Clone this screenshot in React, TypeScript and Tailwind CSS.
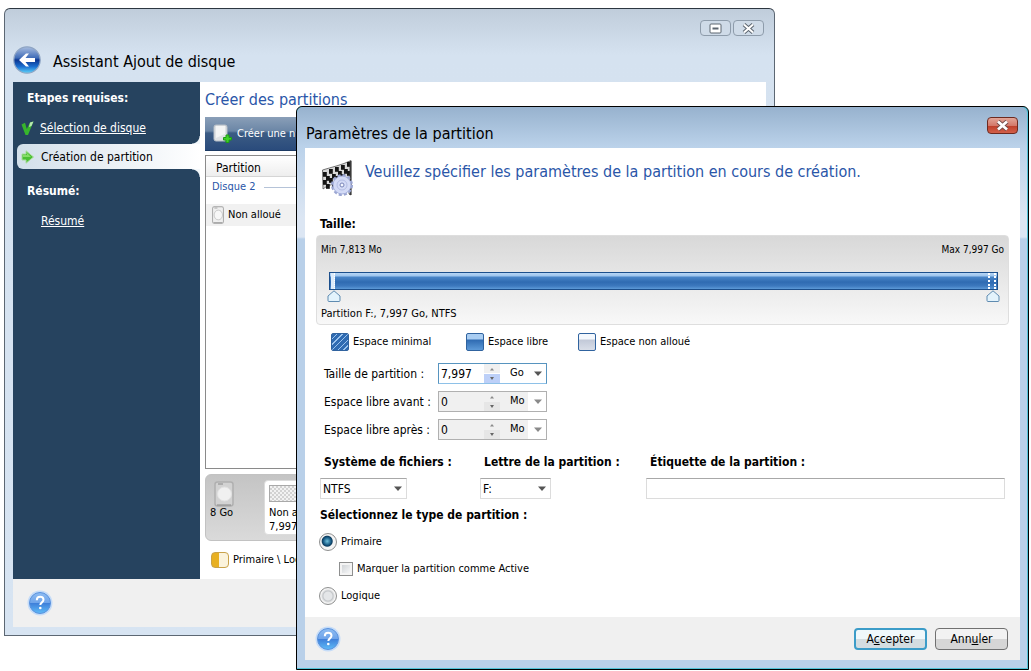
import { useState, type ReactNode } from 'react';

function HelpIcon() {
  return (
    <svg width="26" height="26" viewBox="0 0 26 26" aria-hidden="true">
      <defs>
        <linearGradient id="helpBall" x1="0" y1="0" x2="0" y2="1">
          <stop offset="0" stopColor="#8fbdf2" />
          <stop offset="0.48" stopColor="#6fa4ea" />
          <stop offset="0.52" stopColor="#3f80da" />
          <stop offset="1" stopColor="#5fbcf8" />
        </linearGradient>
      </defs>
      <circle cx="13" cy="13" r="12.5" fill="#c5dcf8" />
      <circle cx="13" cy="13" r="10.5" fill="url(#helpBall)" stroke="#5a92de" />
      <path
        d="M9.8 10.2c0-2.2 1.4-3.4 3.4-3.4s3.3 1.2 3.3 3c0 2.6-3.2 2.6-3.2 5.2"
        fill="none"
        stroke="#fff"
        strokeWidth="2"
      />
      <circle cx="13.3" cy="18" r="1.3" fill="#fff" />
    </svg>
  );
}

function BackIcon() {
  return (
    <svg width="28" height="28" viewBox="0 0 28 28" aria-hidden="true">
      <defs>
        <linearGradient id="backBall" x1="0" y1="0" x2="0" y2="1">
          <stop offset="0" stopColor="#a9bddf" />
          <stop offset="0.42" stopColor="#3f6cb8" />
          <stop offset="0.5" stopColor="#0b3590" />
          <stop offset="0.75" stopColor="#1b6fd0" />
          <stop offset="1" stopColor="#5fd4fa" />
        </linearGradient>
      </defs>
      <circle cx="14" cy="14" r="13.2" fill="url(#backBall)" stroke="#8fa5c4" strokeWidth="1.2" />
      <path d="M6 14l7-6.500h3L12.500 12H22v4h-9.500l3.500 4.500h-3z" fill="#fff" />
    </svg>
  );
}

function CheckIcon() {
  return (
    <svg width="13" height="15" viewBox="0 0 13 15" aria-hidden="true">
      <path d="M0.500 3.500L4 1.800 5.800 8 9 1.500 12.500 0.500 7 14H4.500z" fill="#37b52c" />
      <path d="M9 1.500L12.500 0.500 10.500 5 8 6z" fill="#b8e8b0" />
    </svg>
  );
}

function StepArrowIcon() {
  return (
    <svg width="14" height="14" viewBox="0 0 14 14" aria-hidden="true">
      <path d="M1 4h4V0.800L12.500 7 5 13.200V10H1z" fill="#4cc034" stroke="#a9dc9c" />
      <path d="M2 5h4V3l4 4H2z" fill="#86dd68" />
    </svg>
  );
}

function DiskIcon({ size = 'small' }: { size?: 'small' | 'large' }) {
  const large = size === 'large';
  return (
    <svg width={large ? 20 : 12} height={large ? 26 : 18} viewBox="0 0 20 26" preserveAspectRatio="none" aria-hidden="true">
      <rect x="1" y="1" width="18" height="24" rx="2.500" fill={large ? '#d2d2d2' : '#efefef'} stroke={large ? '#b0b0b0' : '#a3a3a3'} strokeWidth="1.500" />
      <circle cx="10.500" cy="13" r="7" fill={large ? '#f0f0f0' : '#f7f7f7'} stroke={large ? '#e2e2e2' : '#b5b5b5'} />
      <path d="M4 3h5M3 24h14" stroke="#888" />
    </svg>
  );
}

function NewPartitionIcon() {
  return (
    <svg width="20" height="20" viewBox="0 0 20 20" aria-hidden="true">
      <rect x="1" y="1" width="13" height="16" rx="2" fill="#dfe2e4" stroke="#b7bec6" />
      <path d="M3 2h9v8L3 14z" fill="#f3f4f4" />
      <path d="M13 11h3v2.500h2.500V16H16v2.500h-3V16h-2.500v-2.500H13z" fill="#3ed128" stroke="#1f9c14" />
    </svg>
  );
}

function FlagIcon() {
  const squares = [
    [1, 12], [7, 9], [13, 7], [19, 5], [25, 2],
    [4, 16], [10, 14], [16, 11], [22, 9],
    [1, 20], [7, 18], [13, 16], [19, 14], [25, 11],
    [4, 24], [10, 22],
  ];
  return (
    <svg width="31" height="37" viewBox="0 0 31 37" aria-hidden="true">
      <path d="M0.500 10C10 7 20 5 29 0.500V35l-2-1V20C18 24 8 23 1 29z" fill="#d8d8d8" stroke="#555" strokeWidth="0.800" />
      {squares.map(([x, y]) => (
        <rect key={`${x}-${y}`} x={x} y={y} width="3.800" height="4.800" fill="#141414" />
      ))}
      <path d="M28.500 1v34" stroke="#3a3a3a" strokeWidth="1.800" />
      <circle cx="20" cy="25" r="9.500" fill="none" stroke="#9aa5d2" strokeWidth="3" strokeDasharray="3 2" />
      <circle cx="20" cy="25" r="9" fill="#d3daf6" stroke="#a5b0dc" />
      <circle cx="20" cy="25" r="5" fill="none" stroke="#b3bde4" />
      <circle cx="20" cy="25" r="2" fill="#f4f6ff" stroke="#7884b8" />
    </svg>
  );
}

function Triangle({ up = false, muted = false }: { up?: boolean; muted?: boolean }) {
  return (
    <svg width="8" height="5" viewBox="0 0 8 5" className="pointer-events-none shrink-0" aria-hidden="true">
      <path d={up ? 'M2 4.500h4L4 2z' : 'M0 0.500h8L4 5z'} fill={muted ? '#8a8a8a' : '#555'} />
    </svg>
  );
}

function SizeField({ id, label, value, unit, disabled = false }: {
  id: string; label: string; value: string; unit: string; disabled?: boolean;
}) {
  return (
    <div className="flex items-center">
      <label htmlFor={id} className="w-[114px] whitespace-nowrap">{label}</label>
      <div className={`flex h-[21px] w-[109px] items-stretch border ${disabled ? 'border-[#b0b0b0] bg-[#f0f0f0]' : 'border-[#5794bf] border-b-[#8ec1e8] bg-white'}`}>
        <input id={id} defaultValue={value} disabled={disabled} className="w-[45px] min-w-0 px-0.5 outline-none" />
        <div className="flex w-4 flex-col gap-px">
          <button type="button" aria-label={`Augmenter ${label}`} disabled={disabled} className="flex flex-1 items-center justify-center bg-[#f0f0f0]">
            <Triangle up muted />
          </button>
          <button type="button" aria-label={`Diminuer ${label}`} disabled={disabled} className={`flex flex-1 items-center justify-center ${disabled ? 'bg-[#e6e6e6]' : 'bg-[#bdd0f8]'}`}>
            <svg width="6" height="4" viewBox="0 0 6 4" aria-hidden="true"><path d="M1 0h4L3 3z" fill="#666" /></svg>
          </button>
        </div>
        <div className={`relative flex flex-1 ${disabled ? 'bg-gradient-to-r from-[#f0f0f0] from-60% to-white to-60%' : ''}`}>
          <select aria-label={`Unité, ${label}`} defaultValue={unit} disabled={disabled} className="w-full appearance-none pl-2.5 text-[11px] opacity-100 outline-none">
            <option>Mo</option>
            <option>Go</option>
          </select>
          <span className="pointer-events-none absolute inset-y-0 right-1 flex items-center"><Triangle muted={disabled} /></span>
        </div>
      </div>
    </div>
  );
}

function SelectBox({ id, options, className }: { id: string; options: string[]; className: string }) {
  return (
    <div className={`relative flex h-[21px] border border-[#dcdcdc] border-t-[#a8a8a8] bg-white ${className}`}>
      <select id={id} className="w-full appearance-none pl-0.5 outline-none">
        {options.map((o) => <option key={o}>{o}</option>)}
      </select>
      <span className="pointer-events-none absolute inset-y-0 right-1 flex items-center"><Triangle /></span>
    </div>
  );
}

function Legend({ swatch, children }: { swatch: string; children: ReactNode }) {
  return (
    <div className="flex items-center gap-1">
      <span className={`h-[18px] w-[18px] rounded-xs border border-[#30639f] ${swatch}`} />
      {children}
    </div>
  );
}

function SizeSlider() {
  const [range, setRange] = useState([0, 100]);
  const names = ['Début de la partition', 'Fin de la partition'];

  return (
    <div className="relative mr-2.5 ml-3 h-[30px]">
      <div className="flex h-[18px] items-stretch justify-between border border-[#1c4f8c] bg-[linear-gradient(to_bottom,#b7d6f5_0px,#9cc4ee_3px,#4a86c8_4px,#2f6bb2_9px,#3d79be_13px,#5d9ad8_16px)] px-px">
        <span className="w-1 border-r border-dotted border-white bg-[#dcebfa]" />
        <span className="w-2 border-x-2 border-dotted border-white" />
      </div>
      {range.map((value, i) => (
        <div key={names[i]}>
          <input
            type="range"
            aria-label={names[i]}
            value={value}
            onChange={(e) => setRange(range.map((v, j) => (j === i ? Number(e.target.value) : v)))}
            className="absolute bottom-0 left-0 h-3 w-full opacity-0"
          />
          <svg
            width="14"
            height="12"
            viewBox="0 0 14 12"
            className="pointer-events-none absolute bottom-0 -translate-x-1/2"
            style={{ left: `calc(${value}% + ${5 - value / 10}px)` }}
            aria-hidden="true"
          >
            <path d="M7 0.800L13 6v4.500q0 1-1 1H2q-1 0-1-1V6z" fill="#e3f3fc" stroke="#5f8bb0" />
          </svg>
        </div>
      ))}
    </div>
  );
}

function WizardWindow() {
  return (
    <section className="col-start-1 row-start-1 mt-2 mr-[256px] ml-1 flex flex-col rounded-t-md border border-[#5c6773] border-t-[#2c3640] bg-[linear-gradient(to_bottom,#c0cddb_0px,#d5e2f0_46px,#d7e4f2_100%)] px-2 pb-2">
      <header className="flex h-[73px] justify-between">
        <div className="flex items-end gap-3 pb-2">
          <button type="button" aria-label="Retour"><BackIcon /></button>
          <h1 className="text-base">Assistant Ajout de disque</h1>
        </div>
        <div className="mt-[11px] mr-[2px] flex h-4 gap-0.5">
          <button type="button" aria-label="Réduire" className="flex w-[31px] items-center justify-center rounded-sm border border-[#8e9cab] bg-[#cfdbe8]">
            <svg width="13" height="11" viewBox="0 0 13 11" aria-hidden="true">
              <rect x="1" y="1" width="11" height="9" rx="1" fill="#fff" stroke="#5d6670" />
              <path d="M3.500 5.500h6" stroke="#5d6670" strokeWidth="2" />
            </svg>
          </button>
          <button type="button" aria-label="Fermer l’assistant" className="flex w-[31px] items-center justify-center rounded-sm border border-[#8e9cab] bg-[#cfdbe8]">
            <svg width="13" height="11" viewBox="0 0 13 11" aria-hidden="true">
              <path d="M2 1.500l9 8M11 1.500l-9 8" stroke="#5d6670" strokeWidth="4" />
              <path d="M2 1.500l9 8M11 1.500l-9 8" stroke="#fff" strokeWidth="2" />
            </svg>
          </button>
        </div>
      </header>

      <div className="flex bg-white">
        <nav className="w-[187px] shrink-0 bg-[#26435f] pt-2 text-xs leading-4 text-white">
          <h2 className="pl-3.5 font-bold">Etapes requises:</h2>
          <div className="mt-3.5 flex h-4 items-center gap-1.5 pl-2">
            <CheckIcon />
            <a href="#selection" className="underline">Sélection de disque</a>
          </div>
          <div className="flex flex-col">
            <span className="h-2 w-2 self-end bg-[radial-gradient(circle_at_0_0,#26435f_7px,#f3f8fb_8px)]" />
            <div className="ml-1 flex h-[25px] items-center gap-1.5 rounded-l-md bg-gradient-to-r from-[#d3e0ea] to-white pl-1 text-black">
              <StepArrowIcon />
              <span>Création de partition</span>
            </div>
            <span className="h-2 w-2 self-end bg-[radial-gradient(circle_at_0_100%,#26435f_7px,#f3f8fb_8px)]" />
          </div>
          <h2 className="mt-1.5 pl-3.5 font-bold">Résumé:</h2>
          <a href="#resume" className="mt-3.5 ml-7 inline-block underline">Résumé</a>
        </nav>

        <div className="min-w-0 flex-1 overflow-hidden whitespace-nowrap pl-[5px]">
          <h2 className="pt-1.5 text-base text-[#2a56a8]">Créer des partitions</h2>
          <div className="mt-[5px] flex h-[34px] items-center border-b border-[#1c3a63] bg-[linear-gradient(to_bottom,#8a9fb8_0px,#6b86a6_14px,#3c5c84_16px,#2a4b7c_100%)] pl-2 text-white">
            <button type="button" className="flex items-center gap-1">
              <NewPartitionIcon />
              Créer une n
            </button>
          </div>
          <div className="mt-[4px] h-[314px] border border-[#8a8a8a]">
            <table className="w-full border-collapse text-left">
              <thead>
                <tr className="h-5 bg-gradient-to-b from-white to-[#ededed]">
                  <th className="border-b border-[#d5d5d5] pt-1 pl-2.5 text-xs font-normal leading-4">Partition</th>
                </tr>
              </thead>
              <tbody>
                <tr className="h-[27px]">
                  <td className="pb-1.5 pl-1.5 text-[#2a56a8]">
                    <div className="flex items-center gap-2">
                      Disque 2
                      <span className="h-px flex-1 bg-[#b5c3d8]" />
                    </div>
                  </td>
                </tr>
                <tr className="h-[22px] bg-[#f1f1f1]">
                  <td className="pl-1.5">
                    <div className="flex items-center gap-1"><DiskIcon />Non alloué</div>
                  </td>
                </tr>
              </tbody>
            </table>
          </div>
          <div className="mt-[5px] flex h-[67px] rounded-l-md border border-[#c2c2c2] bg-gradient-to-b from-[#c4c4c4] to-[#dadada]">
            <div className="w-[58px] pt-1.5 pl-1">
              <span className="block pl-1"><DiskIcon size="large" /></span>
              <span className="block leading-3">8 Go</span>
            </div>
            <div className="my-[5px] w-[400px] rounded-sm border border-[#dcdcdc] bg-white p-1 leading-3.5">
              <div className="mb-1 h-[17px] border border-[#a9a9a9] bg-[#e8e8e8] bg-[repeating-conic-gradient(#d2d2d2_0_25%,#f2f2f2_0_50%)] bg-size-[4px_4px]" />
              Non alloué
              <br />
              7,997 Go
            </div>
          </div>
          <div className="flex h-[38px] items-center gap-1 pl-1.5">
            <span className="h-4 w-[18px] rounded-sm border border-[#c9a24a] bg-gradient-to-r from-[#e8b022] from-45% to-[#fbf3dc] to-45%" />
            Primaire \ Logique
          </div>
        </div>
      </div>

      <footer className="flex h-12 items-center bg-[#f0f0f0] pl-3.5">
        <button type="button" aria-label="Aide de l’assistant"><HelpIcon /></button>
      </footer>
    </section>
  );
}

function PartitionDialog() {
  const [kind, setKind] = useState('primaire');
  const radio =
    'h-[18px] w-[18px] appearance-none rounded-full border border-[#8e8f8f] bg-[radial-gradient(circle,#e4e6e8_0_4px,#c3c6c9_5px,#f4f4f4_7px)] checked:bg-[radial-gradient(circle_at_45%_45%,#6fc0dc_0,#14557f_4px,#0f3d5e_5px,#f4f4f4_6px)]';

  return (
    <section role="dialog" aria-labelledby="dialog-title" className="z-10 col-start-1 row-start-1 mt-[106px] mr-[2px] ml-[296px] rounded-t-md border border-black bg-[#52c3d8] pr-px pb-px">
      <div className="rounded-t-md bg-[linear-gradient(to_bottom,#97b2ce_0px,#bbd2ea_40px,#dce6f3_110px,#dce6f3_130px,#b9d0e9_132px)] pt-px pr-[7px] pb-2 pl-2">
        <header className="flex h-10 items-center justify-between">
          <h1 id="dialog-title" className="pt-3 pl-px text-base">Paramètres de la partition</h1>
          <button type="button" aria-label="Fermer" className="mr-0.5 mb-1.5 flex h-[17px] w-[31px] items-center justify-center rounded-sm border border-[#6d2a20] bg-[linear-gradient(to_bottom,#e2a598_0,#d4796a_50%,#bd3c28_50%,#d2604a_100%)]">
            <svg width="13" height="11" viewBox="0 0 13 11" aria-hidden="true">
              <path d="M2 1.500l9 8M11 1.500l-9 8" stroke="#6f4a48" strokeWidth="4.500" />
              <path d="M2 1.500l9 8M11 1.500l-9 8" stroke="#fff" strokeWidth="2.800" />
            </svg>
          </button>
        </header>

        <div className="bg-white px-[11px] py-3">
          <div className="flex h-[38px] gap-3 pl-1.5">
            <FlagIcon />
            <p className="text-base text-[#2a56a8]">
              Veuillez spécifier les paramètres de la partition en cours de création.
            </p>
          </div>
          <h2 className="mt-[18px] pl-1 text-xs font-bold leading-4">Taille:</h2>

          <div className="mt-[3px] h-[90px] rounded-sm border border-[#dedede] bg-gradient-to-b from-[#d8d8d8] to-[#f8f8f8]">
            <div className="flex h-9 justify-between px-1 pt-1.5 text-[10px] leading-4">
              <span>Min 7,813 Mo</span>
              <span>Max 7,997 Go</span>
            </div>
            <SizeSlider />
            <p className="pt-1 pl-1 leading-4">Partition F:, 7,997 Go, NTFS</p>
          </div>

          <div className="mt-2 ml-[15px] flex h-[18px]">
            <div className="w-[135px]">
              <Legend swatch="bg-[repeating-linear-gradient(135deg,#2f6bb2_0_3px,#9cc4ee_3px_4px)]">Espace minimal</Legend>
            </div>
            <div className="w-[112px]">
              <Legend swatch="bg-[linear-gradient(to_bottom,#a9cdf2_0_5px,#2f6bb2_6px,#5d9ad8_100%)]">Espace libre</Legend>
            </div>
            <Legend swatch="bg-[linear-gradient(to_bottom,#f4f8fd_0_5px,#c2c9d8_6px,#d9dee8_100%)]">Espace non alloué</Legend>
          </div>

          <div className="mt-3 ml-2 flex flex-col gap-[7px] text-xs">
            <SizeField id="taille" label="Taille de partition :" value="7,997" unit="Go" />
            <SizeField id="avant" label="Espace libre avant :" value="0" unit="Mo" disabled />
            <SizeField id="apres" label="Espace libre après :" value="0" unit="Mo" disabled />
          </div>

          <div className="mt-3.5 mr-1 ml-1 flex text-xs">
            <div className="w-40">
              <label htmlFor="fs" className="mb-2 block pl-1 font-bold leading-4">Système de fichiers :</label>
              <SelectBox id="fs" options={['NTFS', 'FAT32']} className="w-[87px]" />
            </div>
            <div className="w-[166px]">
              <label htmlFor="letter" className="mb-2 block pl-1 font-bold leading-4">Lettre de la partition :</label>
              <SelectBox id="letter" options={['F:', 'G:']} className="w-[71px]" />
            </div>
            <div className="flex-1">
              <label htmlFor="tag" className="mb-2 block pl-1 font-bold leading-4">Étiquette de la partition :</label>
              <input id="tag" className="block h-[21px] w-full border border-[#dcdcdc] border-t-[#a8a8a8] px-1 outline-none" />
            </div>
          </div>

          <fieldset className="mt-2 ml-[3px]">
            <legend className="pl-px text-xs font-bold leading-4">Sélectionnez le type de partition :</legend>
            <label className="mt-2.5 flex h-[18px] items-center gap-1">
              <input type="radio" name="kind" className={radio} checked={kind === 'primaire'} onChange={() => setKind('primaire')} />
              Primaire
            </label>
            <label className="mt-[9px] ml-5 flex h-[18px] items-center gap-1">
              <input type="checkbox" className="h-3.5 w-3.5 appearance-none border border-[#8e8f8f] bg-gradient-to-br from-[#c8ccd0] to-white shadow-[inset_0_0_0_2px_#f4f4f4] checked:from-[#14557f]" />
              Marquer la partition comme Active
            </label>
            <label className="mt-[9px] flex h-[18px] items-center gap-1">
              <input type="radio" name="kind" className={radio} checked={kind === 'logique'} onChange={() => setKind('logique')} />
              Logique
            </label>
          </fieldset>
        </div>

        <footer className="flex h-[43px] items-center justify-between bg-[#f0f0f0] pr-3 pl-2.5 text-xs">
          <button type="button" aria-label="Aide"><HelpIcon /></button>
          <div className="flex gap-2">
            <button type="button" className="h-[22px] w-[73px] rounded-sm border-2 border-[#3c9cc8] bg-gradient-to-b from-[#f0f8fb] from-50% to-[#d4dde1] to-50%">
              A<u>c</u>cepter
            </button>
            <button type="button" className="h-[22px] w-[73px] rounded-sm border border-[#707070] bg-gradient-to-b from-[#f2f2f2] from-50% to-[#d6d6d6] to-50%">
              Ann<u>u</u>ler
            </button>
          </div>
        </footer>
      </div>
    </section>
  );
}

function App() {
  return (
    <main className="grid min-h-screen grid-cols-1 items-start bg-white font-['DejaVu_Sans_Condensed','DejaVu_Sans',sans-serif] text-[11px] leading-4 text-black">
      <WizardWindow />
      <PartitionDialog />
    </main>
  );
}

export default App;
